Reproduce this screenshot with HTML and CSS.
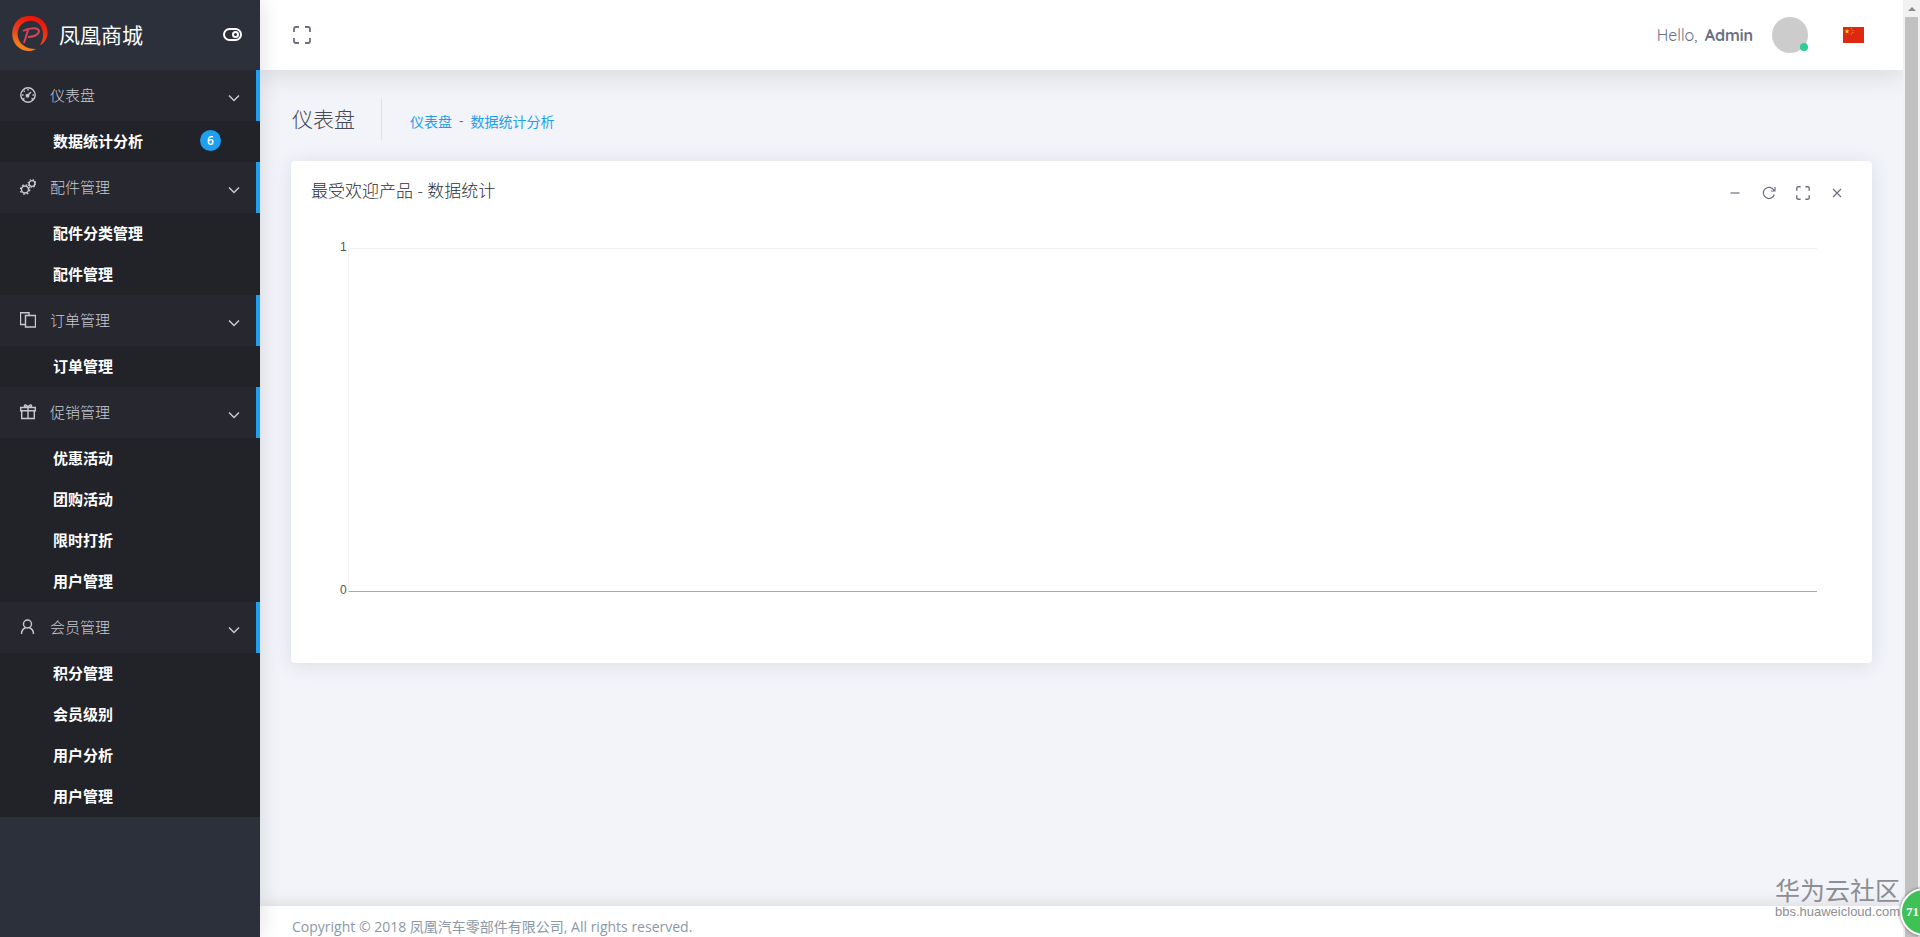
FILE: index.html
```
<!DOCTYPE html>
<html lang="zh-CN">
<head>
  <meta charset="UTF-8">
  <meta name="viewport" content="width=device-width, initial-scale=1.0">
  <title>凤凰商城</title>
  <link rel="stylesheet" href="styles.css">
</head>
<body>

  <!-- icons -->
  <svg class="sprite" aria-hidden="true">
    <symbol id="icon-arrow" viewBox="0 0 12 8"><path d="M1 1.5l5 5 5-5"/></symbol>
    <symbol id="icon-fullscreen" viewBox="0 0 18 18"><path d="M1 6V3q0-2 2-2h3M12 1h3q2 0 2 2v3M17 12v3q0 2-2 2h-3M6 17H3q-2 0-2-2v-3"/></symbol>
  </svg>

  <div class="page">
    <aside class="sidebar">
      <div class="brand">
        <a href="#" class="brand-link">
          <svg class="brand-logo" viewBox="0 0 36 36">
            <defs>
              <linearGradient id="ring" x1="0.2" y1="1" x2="0.6" y2="0">
                <stop offset="0" stop-color="#f7931e"/>
                <stop offset="0.5" stop-color="#e8401a"/>
                <stop offset="1" stop-color="#f01008"/>
              </linearGradient>
            </defs>
            <path fill="url(#ring)" d="M28 29C37 25 38 12 31 5 24-2 10-2 4 6-3 16 0 30 11 34c5 2 10 1 13-1-5 0-9-1-13-4C4 24 4 13 10 8c6-5 14-4 18 1 4 5 4 14 0 20z"/>
            <path fill="none" stroke="#d9435a" stroke-width="2" d="M16 14l-4 13M11 15c5-3 15-4 16 0 0 4-6 6-11 6"/>
          </svg>
          <span class="brand-name">凤凰商城</span>
        </a>
        <button type="button" class="icon-button toggle" aria-label="Toggle menu">
          <svg viewBox="0 0 19 13"><rect x="1" y="1" width="17" height="11" rx="5.5"/><circle cx="12.5" cy="6.5" r="2.5"/></svg>
        </button>
      </div>

      <nav class="menu">
        <div class="menu-group">
          <a href="#" class="menu-title">
            <svg class="menu-icon" viewBox="0 0 16 16"><circle cx="8" cy="8" r="7.2"/><path d="M7 9l4-4M2 8h1.500M8 2v1.500M3.700 3.700l1 1M12.500 8H14M3 12.300l1.500-1M13 12.300l-1.500-1"/><circle cx="7.500" cy="8.700" r="1.300"/></svg>
            <span>仪表盘</span>
            <svg class="arrow"><use href="#icon-arrow"/></svg>
          </a>
          <a href="#" class="menu-item">数据统计分析 <span class="badge">6</span></a>
        </div>
        <div class="menu-group">
          <a href="#" class="menu-title">
            <svg class="menu-icon" viewBox="0 0 16 16"><circle cx="5" cy="10.500" r="3.500"/><circle cx="5" cy="10.500" r="4.700" stroke-width="1.400" stroke-dasharray="1.700 2"/><circle cx="12" cy="4.500" r="2.900"/><circle cx="12" cy="4.500" r="3.900" stroke-width="1.200" stroke-dasharray="1.400 1.700"/></svg>
            <span>配件管理</span>
            <svg class="arrow"><use href="#icon-arrow"/></svg>
          </a>
          <a href="#" class="menu-item">配件分类管理</a>
          <a href="#" class="menu-item">配件管理</a>
        </div>
        <div class="menu-group">
          <a href="#" class="menu-title">
            <svg class="menu-icon" viewBox="0 0 16 16"><path d="M5.500 3.500h10v11.500h-10zM5.500 12.500h-5V.7h8.500V3.500"/></svg>
            <span>订单管理</span>
            <svg class="arrow"><use href="#icon-arrow"/></svg>
          </a>
          <a href="#" class="menu-item">订单管理</a>
        </div>
        <div class="menu-group">
          <a href="#" class="menu-title">
            <svg class="menu-icon" viewBox="0 0 16 16"><path d="M.7 3.500h14.600v3.300H.7zM1.700 6.800v7.700h12.600V6.800M8 3.500v11M8 3.500C6 3.500 4 2.500 4.500 1.500S7 1 8 3.500c1-2.500 3-3 3.500-2S10 3.500 8 3.500z"/></svg>
            <span>促销管理</span>
            <svg class="arrow"><use href="#icon-arrow"/></svg>
          </a>
          <a href="#" class="menu-item">优惠活动</a>
          <a href="#" class="menu-item">团购活动</a>
          <a href="#" class="menu-item">限时打折</a>
          <a href="#" class="menu-item">用户管理</a>
        </div>
        <div class="menu-group">
          <a href="#" class="menu-title">
            <svg class="menu-icon" viewBox="0 0 16 16"><circle cx="7.500" cy="5" r="4"/><path d="M1.500 15c0-3 2-5.500 4.300-6.500M13.500 15c0-3-2-5.500-4.300-6.500"/></svg>
            <span>会员管理</span>
            <svg class="arrow"><use href="#icon-arrow"/></svg>
          </a>
          <a href="#" class="menu-item">积分管理</a>
          <a href="#" class="menu-item">会员级别</a>
          <a href="#" class="menu-item">用户分析</a>
          <a href="#" class="menu-item">用户管理</a>
        </div>
      </nav>
    </aside>

    <div class="main">
      <header class="topbar">
        <button type="button" class="icon-button expand" aria-label="Fullscreen">
          <svg><use href="#icon-fullscreen"/></svg>
        </button>
        <div class="user">
          <span class="hello">Hello, <strong>Admin</strong></span>
          <span class="avatar"><span class="status"></span></span>
          <svg class="flag" viewBox="0 0 21 16">
            <rect width="21" height="16" fill="#de2910"/>
            <path fill="#ffde00" d="M4 2l.6 1.600h1.700L5 4.700l.5 1.700L4 5.400 2.500 6.400 3 4.700 1.700 3.600h1.700z"/>
            <path fill="#f39a1c" d="M8 1h1v1H8zM9.500 3h1v1h-1zM9.500 5h1v1h-1zM8 6.500h1v1H8z"/>
          </svg>
        </div>
      </header>

      <main class="content">
        <div class="content-header">
          <h1>仪表盘</h1>
          <div class="breadcrumb"><a href="#">仪表盘</a><span>-</span><a href="#">数据统计分析</a></div>
        </div>

        <section class="card">
          <div class="card-header">
            <h2>最受欢迎产品 - 数据统计</h2>
            <div class="card-tools">
              <button type="button" class="icon-button" aria-label="Collapse"><svg viewBox="0 0 14 14"><path d="M2.500 7h9"/></svg></button>
              <button type="button" class="icon-button" aria-label="Reload"><svg viewBox="0 0 14 14"><path d="M12.300 8.500A5.600 5.600 0 1 1 12 4.500M13 1v4H9"/></svg></button>
              <button type="button" class="icon-button" aria-label="Expand"><svg class="small-expand"><use href="#icon-fullscreen"/></svg></button>
              <button type="button" class="icon-button" aria-label="Close"><svg viewBox="0 0 14 14"><path d="M3 3l8 8M11 3l-8 8"/></svg></button>
            </div>
          </div>
          <div class="chart">
            <div class="chart-axis"><span>1</span><span>0</span></div>
            <div class="chart-plot"></div>
          </div>
        </section>
      </main>

      <footer class="footer">Copyright © 2018 凤凰汽车零部件有限公司, All rights reserved.</footer>
    </div>

    <div class="scrollbar">
      <svg class="scroll-arrow" viewBox="0 0 8 4"><path d="M0 4l4-4 4 4z"/></svg>
      <div class="scroll-thumb"></div>
    </div>
  </div>

  <div class="watermark">
    <div class="watermark-name">华为云社区</div>
    <div class="watermark-url">bbs.huaweicloud.com</div>
  </div>
  <div class="speed-ball">71</div>

</body>
</html>
```
FILE: styles.css
```
* {
  box-sizing: border-box;
}

body {
  margin: 0;
  font-family: "Open Sans", "Noto Sans CJK SC", sans-serif;
  font-size: 14px;
  color: #6b6f82;
  background-color: #f2f4fa;
  overflow: hidden;
}

a {
  color: #1e9ff2;
  text-decoration: none;
}

h1, h2 {
  margin: 0;
  font-weight: 300;
}

.sprite {
  position: absolute;
  width: 0;
  height: 0;
}

svg {
  display: block;
  fill: none;
  stroke: currentColor;
}

.flag,
.brand-logo,
.scroll-arrow {
  stroke: none;
}

.icon-button {
  padding: 0;
  border: none;
  background: none;
  color: inherit;
  cursor: pointer;
}

.page {
  display: flex;
  height: 100vh;
}

/* sidebar */
.sidebar {
  flex: 0 0 260px;
  background-color: #2c303b;
  box-shadow: 1px 0 20px rgba(0, 0, 0, 0.12);
  z-index: 2;
}

.brand {
  display: flex;
  align-items: center;
  justify-content: space-between;
  height: 70px;
  padding: 0 18px 2px 12px;
}

.brand-link {
  display: flex;
  align-items: center;
  gap: 11px;
  color: #fff;
}

.brand-logo {
  width: 36px;
  height: 36px;
}

.brand-name {
  font-size: 21px;
}

.toggle {
  color: #fff;
}

.toggle svg {
  width: 19px;
  height: 13px;
  stroke-width: 2;
}

.menu-title {
  display: flex;
  align-items: center;
  height: 51px;
  padding: 0 16px 2px 20px;
  border-right: 4px solid #1e9ff2;
  background-color: #272730;
  color: #c8cad2;
  font-size: 15px;
  font-weight: 300;
}

.menu-icon {
  width: 16px;
  height: 16px;
  margin-right: 14px;
  stroke-width: 1.4;
}

.arrow {
  width: 12px;
  height: 8px;
  margin: 6px 0 0 auto;
  stroke-width: 1.5;
}

.menu-item {
  display: flex;
  align-items: center;
  justify-content: space-between;
  height: 41px;
  padding: 0 39px 2px 53px;
  background-color: #222229;
  color: #fff;
  font-size: 15px;
  font-weight: 700;
}

.badge {
  width: 21px;
  height: 21px;
  border-radius: 50%;
  background-color: #1e9ff2;
  font-size: 12px;
  font-weight: 600;
  line-height: 21px;
  text-align: center;
}

/* top bar */
.main {
  flex: 1;
  display: flex;
  flex-direction: column;
  min-width: 0;
}

.topbar {
  display: flex;
  align-items: center;
  justify-content: space-between;
  height: 70px;
  padding: 0 39px 0 33px;
  background-color: #fff;
  box-shadow: 0 2px 30px 2px rgba(0, 0, 0, 0.12);
}

.expand svg {
  width: 18px;
  height: 18px;
  stroke-width: 1.8;
}

.user {
  display: flex;
  align-items: center;
}

.hello {
  margin-right: 19px;
  font-family: Quicksand, Lato, sans-serif;
  font-size: 16px;
  font-weight: 400;
}

.hello strong {
  font-weight: 700;
  margin-left: 3px;
}

.avatar {
  position: relative;
  width: 36px;
  height: 36px;
  margin-right: 35px;
  border-radius: 50%;
  background-color: #ccc;
}

.status {
  position: absolute;
  right: 0;
  bottom: 2px;
  width: 8px;
  height: 8px;
  border-radius: 50%;
  background-color: #28d094;
}

.flag {
  width: 21px;
  height: 16px;
}

/* content */
.content {
  flex: 1;
  padding: 29px 31px;
}

.content-header {
  display: flex;
  align-items: center;
  margin-bottom: 21px;
}

.content-header h1 {
  padding: 0 26px 0 1px;
  border-right: 1px solid #dfe1e8;
  color: #464855;
  font-size: 21px;
  line-height: 41px;
}

.breadcrumb {
  display: flex;
  gap: 7px;
  padding: 2px 0 0 28px;
  color: #6b6f82;
}

.card {
  border-radius: 4px;
  background-color: #fff;
  box-shadow: 0 2px 18px 1px rgba(49, 53, 72, 0.1);
}

.card-header {
  display: flex;
  align-items: center;
  justify-content: space-between;
  padding: 16px 28px 16px 20px;
}

.card-header h2 {
  color: #2c303b;
  font-size: 17px;
  line-height: 28px;
}

.card-tools {
  display: flex;
  gap: 20px;
  padding-top: 4px;
}

.card-tools svg {
  width: 14px;
  height: 14px;
  stroke-width: 1.2;
}

.card-tools .small-expand {
  stroke-width: 1.8;
}

.chart {
  display: flex;
  height: 442px;
  padding: 27px 55px 71px 49px;
}

.chart-axis {
  display: flex;
  flex-direction: column;
  justify-content: space-between;
  width: 8px;
  margin: -8px 0 -5px;
  font-family: "Liberation Sans", Arial, sans-serif;
  font-size: 12px;
  line-height: 14px;
  color: #555;
}

.chart-plot {
  flex: 1;
  border-top: 1px solid #f0f0f0;
  border-bottom: 1px solid #aaa;
  border-left: 1px solid #f3f3f3;
}

.footer {
  height: 31px;
  padding: 0 32px;
  background-color: #fff;
  box-shadow: 0 -2px 16px rgba(0, 0, 0, 0.1);
  line-height: 42px;
  color: #8b98a5;
}

/* scrollbar */
.scrollbar {
  flex: 0 0 17px;
  display: flex;
  flex-direction: column;
  align-items: center;
  background-color: #f1f1f1;
  z-index: 1;
}

.scroll-arrow {
  width: 8px;
  height: 4px;
  margin: 7px 0 6px;
  fill: #8a8a8a;
}

.scroll-thumb {
  flex: 1;
  width: 13px;
  background-color: #c1c1c1;
}

/* overlays */
.watermark {
  position: absolute;
  right: 20px;
  bottom: 18px;
  z-index: 3;
  color: #8d8e92;
  text-align: right;
}

.watermark-name {
  font-family: "Noto Sans CJK SC", sans-serif;
  font-size: 25px;
  line-height: 32px;
}

.watermark-url {
  font-family: "Liberation Sans", Arial, sans-serif;
  font-size: 13px;
  line-height: 14px;
}

.speed-ball {
  position: absolute;
  right: -28px;
  bottom: 1px;
  z-index: 4;
  width: 48px;
  height: 48px;
  padding-left: 4px;
  border: 2px solid #fff;
  border-radius: 50%;
  background-color: #3fc155;
  box-shadow: 0 0 3px #555;
  color: #fff;
  font-family: "Liberation Serif", serif;
  font-size: 13px;
  font-weight: 700;
  line-height: 44px;
}
```
